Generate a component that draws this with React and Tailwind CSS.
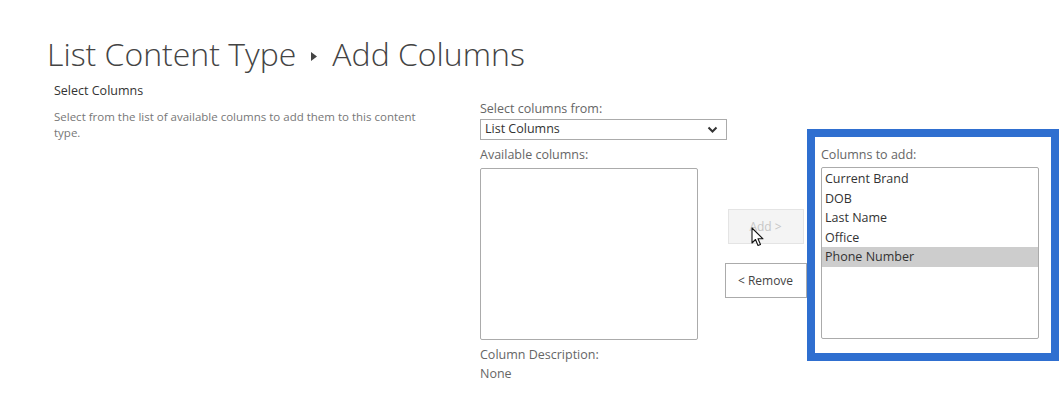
import React from 'react';

const columnsToAdd = ['Current Brand', 'DOB', 'Last Name', 'Office', 'Phone Number'];

const Cursor = () => (
  <svg className="absolute left-[751px] top-[227px]" width="14" height="21" viewBox="0 0 14 21">
    <path d="M1 1 L1 16 L4.5 12.5 L7 18.5 L9.5 17.5 L7 11.8 L12 11.8 Z" fill="#fff" stroke="#111" strokeWidth="1.1" strokeLinejoin="round" />
  </svg>
);

const App = () => {
  return (
    <div className="relative w-[1059px] h-[395px] bg-white overflow-hidden font-['Open_Sans',sans-serif] text-[#444]">
      <h1 className="flex items-center pl-[47px] pt-[33px] text-[32px] leading-[42px] font-light text-[#444]">
        <span>List Content Type</span>
        <svg className="mx-[15px] mt-[4px]" width="6" height="9" viewBox="0 0 6 9">
          <path d="M0 0 L6 4.5 L0 9 Z" fill="#444" />
        </svg>
        <span>Add Columns</span>
      </h1>

      <div className="flex mt-[7px]">
        <div className="w-[480px] pl-[54px]">
          <div className="text-[12.5px] leading-[18px] text-[#333]">Select Columns</div>
          <p className="mt-[9px] text-[11.5px] leading-[16px] text-[#777] w-[370px]">
            Select from the list of available columns to add them to this content type.
          </p>
        </div>

        <div className="flex items-start pt-[19px]">
          <div className="w-[244px]">
            <div className="text-[12.5px] leading-[16px] text-[#666]">Select columns from:</div>
            <div className="mt-[2px] flex items-center justify-between w-[247px] h-[21px] border border-[#ababab] pl-[4px] pr-[8px] text-[12.5px] text-[#333]">
              <span>List Columns</span>
              <svg width="11" height="8" viewBox="0 0 11 8">
                <path d="M1.5 1.5 L5.5 5.5 L9.5 1.5" fill="none" stroke="#333" strokeWidth="2" />
              </svg>
            </div>
            <div className="mt-[7px] text-[12.5px] leading-[16px] text-[#666]">Available columns:</div>
            <div className="mt-[5px] w-[218px] h-[172px] border border-[#ababab] rounded-[2px]"></div>
            <div className="mt-[5px] text-[12.5px] leading-[19px] text-[#666]">
              <div>Column Description:</div>
              <div>None</div>
            </div>
          </div>

          <div className="w-[83px] flex flex-col items-center pt-[108px]">
            <button className="w-[76px] h-[35px] bg-[#f4f4f4] border border-[#e4e4e4] text-[12px] text-[#c6c6c6]">Add &gt;</button>
            <button className="mt-[19px] w-[82px] h-[35px] bg-white border border-[#ababab] text-[12px] text-[#444]">&lt; Remove</button>
          </div>

          <div className="mt-[28px] w-[252px] h-[232px] border-[8px] border-[#2f6fd0] pl-[6px] pt-[10px]">
            <div className="text-[12.5px] leading-[16px] text-[#666]">Columns to add:</div>
            <div className="mt-[4px] w-[218px] h-[172px] border border-[#ababab] rounded-[2px] pt-[1px] text-[12.5px] text-[#333]">
              {columnsToAdd.map((c, i) => (
                <div
                  key={c}
                  className={`pl-[3px] h-[19.5px] leading-[19.5px] ${i === columnsToAdd.length - 1 ? 'bg-[#cdcdcd]' : ''}`}
                >
                  {c}
                </div>
              ))}
            </div>
          </div>
        </div>
      </div>

      <Cursor />
    </div>
  );
};

export default App;
